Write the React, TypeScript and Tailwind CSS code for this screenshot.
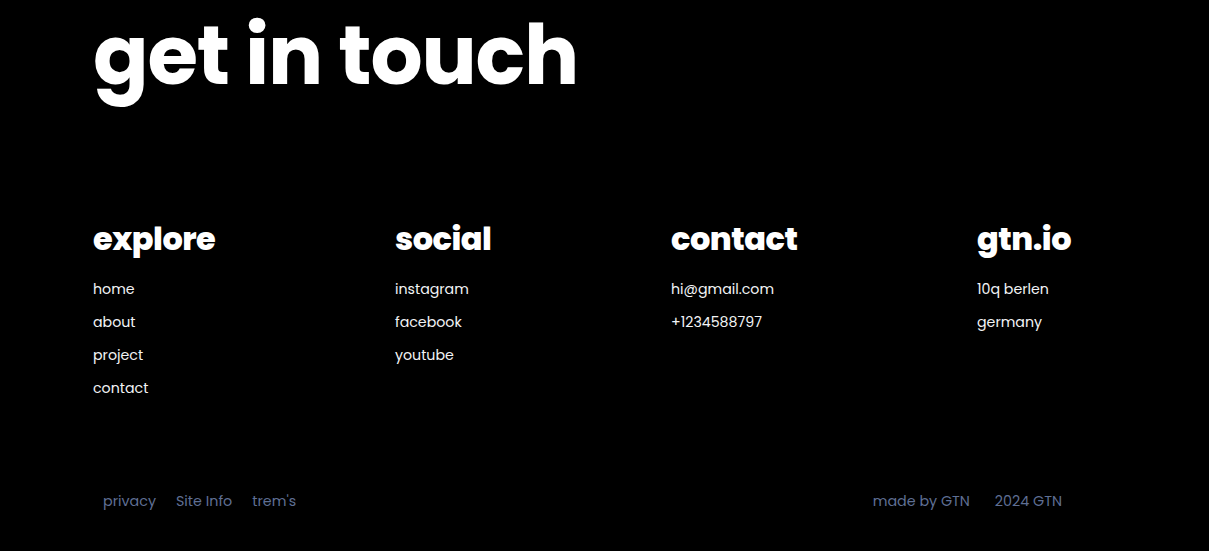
const font = { fontFamily: '"Poppins", "Inter", "DejaVu Sans", sans-serif' };

const columns = [
  { title: "explore", items: ["home", "about", "project", "contact"] },
  { title: "social", items: ["instagram", "facebook", "youtube"] },
  { title: "contact", items: ["hi@gmail.com", "+1234588797"] },
  { title: "gtn.io", items: ["10q berlen", "germany"] },
];

export default function App() {
  return (
    <div className="w-[1209px] h-[551px] bg-black text-white overflow-hidden" style={font}>
      <div className="pl-[93px]">
        <h1 className="text-[82px] leading-[102px] font-bold tracking-[-1.2px] pt-[5px]">get in touch</h1>

        <div className="grid grid-cols-[302px_276px_306px_auto] mt-[114px]">
          {columns.map((col) => (
            <div key={col.title}>
              <h2 className="text-[32px] leading-[36px] font-extrabold tracking-[-0.5px]">{col.title}</h2>
              <ul className="mt-[22px] flex flex-col gap-[13px]">
                {col.items.map((item) => (
                  <li key={item} className="text-[14.2px] leading-[20px] text-gray-100">
                    {item}
                  </li>
                ))}
              </ul>
            </div>
          ))}
        </div>
      </div>

      <div className="flex justify-between items-center mt-[93px] pl-[103px] pr-[147px] text-[14.3px] text-[#5f6f94]">
        <div className="flex gap-[20px]">
          <span>privacy</span>
          <span>Site Info</span>
          <span>trem's</span>
        </div>
        <div className="flex gap-[25px]">
          <span>made by GTN</span>
          <span>2024 GTN</span>
        </div>
      </div>
    </div>
  );
}
